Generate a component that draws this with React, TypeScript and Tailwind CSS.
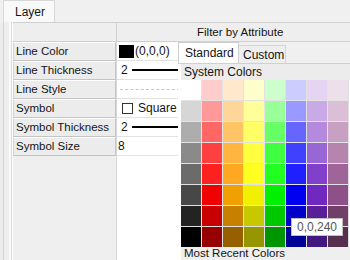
import React from "react";

const grid: string[][] = [
  ["#ffffff", "#ffcccc", "#ffe8cc", "#ffffcc", "#ccffcc", "#ccccff", "#e6d5f2", "#ede0ea"],
  ["#d6d6d6", "#ff9999", "#ffd699", "#ffff99", "#99ff99", "#9999ff", "#c9aae6", "#dbbfd6"],
  ["#adadad", "#ff6666", "#ffc466", "#ffff66", "#66ff66", "#6666ff", "#b38ade", "#c8a0c2"],
  ["#8a8a8a", "#ff4040", "#ffb540", "#ffff40", "#40ff40", "#4040ff", "#9966d6", "#b585ae"],
  ["#6b6b6b", "#ff2020", "#ffa820", "#ffff20", "#20ff20", "#2020ff", "#8040cc", "#a06598"],
  ["#474747", "#f00000", "#f0a000", "#f0f000", "#00f000", "#0000f0", "#7028c0", "#8e5088"],
  ["#232323", "#c80000", "#c88000", "#c8c800", "#00c800", "#0000c8", "#5a2098", "#704068"],
  ["#000000", "#960000", "#966000", "#969600", "#009600", "#000096", "#401880", "#58304f"],
];

function Label({ children }: { children: React.ReactNode }) {
  return (
    <div className="h-[19px] flex items-center pl-[2px] bg-[#ececec] border-t border-t-white border-b border-b-[#c4c4c4] border-r border-r-[#c4c4c4] border-l border-l-[#d4d4d4] whitespace-nowrap text-[11.5px]">
      {children}
    </div>
  );
}

function Value({ children }: { children?: React.ReactNode }) {
  return (
    <div className="h-[19px] flex items-center border-b border-[#e2e2e2] whitespace-nowrap overflow-hidden">
      {children}
    </div>
  );
}

export default function App() {
  return (
    <div className="w-[350px] h-[260px] bg-[#f0f0f0] overflow-hidden relative font-['Liberation_Sans',Arial,sans-serif] text-[12px] text-[#141414] leading-none">
      {/* tab bar */}
      <div className="h-[22px] flex items-end pl-[3px]">
        <div className="h-[22px] w-[52px] bg-[#f9f9f9] border border-b-0 border-[#d8d8d8] flex items-center pl-[11px]">
          Layer
        </div>
      </div>
      <div className="flex h-[238px]">
        {/* left strip */}
        <div className="flex w-[13px] h-full">
          <div className="w-[3px] bg-[#ececec]" />
          <div className="w-[1px] bg-[#d4d4d4]" />
          <div className="w-[5px] bg-[#eeeeee]" />
          <div className="w-[2px] bg-[#fafafa]" />
          <div className="w-[1px] bg-[#dcdcdc]" />
          <div className="w-[1px] bg-white" />
        </div>
        {/* table */}
        <div className="flex-1 flex flex-col border-t border-[#d0d0d0]">
          <div className="h-[19px] flex bg-[#eeeeee] border-b border-[#d0d0d0]">
            <div className="w-[104px] border-r border-[#d0d0d0]" />
            <div className="flex-1 flex items-center pl-[80px] pt-[2px] text-[11.5px]">Filter by Attribute</div>
          </div>
          <div className="flex flex-1">
            <div className="w-[104px] flex flex-col bg-[#efefef] border-r border-[#d8d8d8]">
              <Label>Line Color</Label>
              <Label>Line Thickness</Label>
              <Label>Line Style</Label>
              <Label>Symbol</Label>
              <Label>Symbol Thickness</Label>
              <Label>Symbol Size</Label>
            </div>
            <div className="flex-1 flex flex-col bg-white">
              <Value>
                <div className="ml-[2px] w-[15px] h-[13px] bg-black" />
                <span className="ml-[1px]">(0,0,0)</span>
              </Value>
              <Value>
                <span className="ml-[4px]">2</span>
                <div className="ml-[4px] w-[60px] h-[2px] bg-black" />
              </Value>
              <Value>
                <div className="ml-[3px] w-[60px] border-t border-dashed border-[#c4c4c4]" />
              </Value>
              <Value>
                <div className="ml-[5px] w-[11px] h-[11px] border border-[#333]" />
                <span className="ml-[5px]">Square</span>
              </Value>
              <Value>
                <span className="ml-[4px]">2</span>
                <div className="ml-[4px] w-[60px] h-[2px] bg-black" />
              </Value>
              <Value>
                <span className="ml-[1px]">8</span>
              </Value>
            </div>
          </div>
        </div>
      </div>

      {/* colour picker popup */}
      <div className="absolute left-[178px] top-[42px] w-[172px] bottom-0 bg-white flex flex-col text-[12px]">
        <div className="h-[21px] flex items-end bg-[#f0f0f0]">
          <div className="h-[21px] w-[61px] bg-white border border-b-0 border-[#cfcfcf] flex items-center pl-[6px]">
            Standard
          </div>
          <div className="h-[18px] w-[47px] bg-[#eeeeee] border border-l-0 border-b-0 border-[#d6d6d6] flex items-center pl-[4px]">
            Custom
          </div>
        </div>
        <div className="flex-1 flex flex-col pl-[3px] border-t border-[#d0d0d0]">
          <div className="h-[16px] bg-[#ececec] flex items-center pl-[3px] whitespace-nowrap overflow-hidden">
            System Colors
          </div>
          <div className="grid grid-cols-[repeat(8,20px)] grid-rows-[repeat(8,20px)] gap-[1px] bg-[#e2e2e2] w-[168px]">
            {grid.map((row, r) =>
              row.map((c, i) => (
                <div key={`${r}-${i}`} style={{ backgroundColor: c }} />
              ))
            )}
          </div>
          <div className="flex-1 bg-[#efefef] flex items-center pl-[3px] whitespace-nowrap text-[11.5px]">
            Most Recent Colors
          </div>
        </div>
      </div>

      {/* tooltip */}
      <div className="absolute left-[291px] top-[218px] w-[52px] h-[18px] bg-white border border-[#c0c0c0] flex items-center justify-center text-[12px] text-[#555]">
        0,0,240
      </div>
    </div>
  );
}
